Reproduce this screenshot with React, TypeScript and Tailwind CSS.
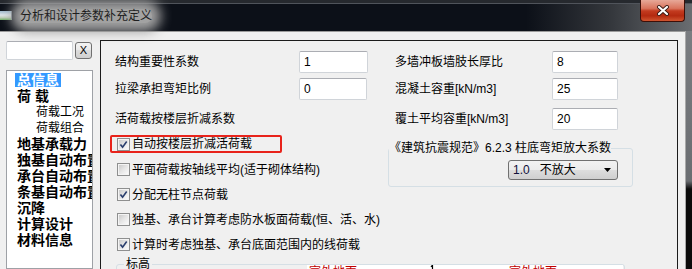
import React from 'react';

const inputCls =
  "h-[22px] bg-white border border-[#d0d4d9] border-t-[#abadb3] rounded-[2px] pl-[4px] text-[12px] leading-[20px] flex items-center";

function Check({ checked }: { checked?: boolean }) {
  return (
    <div className="w-[13px] h-[13px] shrink-0 border border-[#8e8f8f] bg-[#f4f4f4] p-[1px]">
      <div className="w-full h-full bg-[linear-gradient(135deg,#cbcbcb_0%,#e6e6e6_50%,#fafafa_100%)]">
        {checked && (
          <svg viewBox="0 0 9 9" className="w-[9px] h-[9px] block">
            <path d="M1.4 4.4 L3.6 7.1 L7.7 1.5" fill="none" stroke="#2b3f6e" strokeWidth="1.6" />
          </svg>
        )}
      </div>
    </div>
  );
}

function CheckRow({ checked, label }: { checked?: boolean; label: string }) {
  return (
    <div className="h-[25px] flex items-center pl-[7px]">
      <Check checked={checked} />
      <span className="ml-[2px] text-[12px] leading-[14px] whitespace-nowrap">{label}</span>
    </div>
  );
}

const tree = [
  { t: '荷 载', sub: false },
  { t: '荷载工况', sub: true },
  { t: '荷载组合', sub: true },
  { t: '地基承载力', sub: false },
  { t: '独基自动布置', sub: false },
  { t: '承台自动布置', sub: false },
  { t: '条基自动布置', sub: false },
  { t: '沉降', sub: false },
  { t: '计算设计', sub: false },
  { t: '材料信息', sub: false },
];

export default function App() {
  return (
    <div className="w-[692px] h-[269px] overflow-hidden bg-[#f0f0f0] flex flex-col text-black font-['Liberation_Sans','Noto_Sans_CJK_SC',sans-serif]">
      {/* title bar */}
      <div className="h-[31px] shrink-0 flex items-start bg-[linear-gradient(to_bottom,#26292e_0px,#26292e_3px,#50545b_3px,#50545b_4px,transparent_4px),linear-gradient(to_right,#0c1018_0%,#0c1018_76%,#33363b_88%,#6a6d71_100%)]">
        <div className="h-full flex items-center">
          <div className="w-[12px] h-[9px] bg-[linear-gradient(to_bottom,#9fb8cc_0%,#dfe6ea_45%,#c9d2c4_70%,#6fae63_100%)] border-r border-[#7f8b94]" />
          <span className="ml-[8px] text-[12px] leading-[14px] text-[#1e1e1e] bg-[#a2a2a2] rounded-[8px] shadow-[0_0_12px_9px_#a2a2a2] whitespace-nowrap">
            分析和设计参数补充定义
          </span>
        </div>
        <div className="ml-auto mr-[7px] w-[45px] h-[22px] border border-t-0 border-[#3d0f08] rounded-b-[4px] bg-[linear-gradient(to_bottom,#e7a898_0%,#d9735c_40%,#c33b20_52%,#b42a10_75%,#d05530_100%)] flex items-center justify-center">
          <svg viewBox="0 0 14 11" className="w-[14px] h-[11px]">
            <path d="M3 2 L11 9 M11 2 L3 9" stroke="#3a1a14" strokeWidth="4" strokeLinecap="round" />
            <path d="M3 2 L11 9 M11 2 L3 9" stroke="#ffffff" strokeWidth="2.2" strokeLinecap="round" />
          </svg>
        </div>
      </div>

      <div className="flex flex-1 min-h-0">
        {/* client */}
        <div className="w-[685px] border-t border-[#9b9b9b] flex pt-[8px]">
          {/* left nav */}
          <div className="ml-[6px] w-[87px] pt-[1px] flex flex-col">
            <div className="flex items-start h-[19px]">
              <div className="w-[67px] h-[19px] bg-white border border-[#d0d4d9] border-t-[#abadb3] rounded-[2px]" />
              <div className="ml-[2px] mt-[1px] w-[17px] h-[17px] border border-[#707070] rounded-[3px] bg-[linear-gradient(to_bottom,#f3f3f3_0%,#e9e9e9_50%,#dcdcdc_50%,#cfcfcf_100%)] flex items-center justify-center text-[11px] leading-[11px]">
                X
              </div>
            </div>
            <div className="mt-[10px] h-[300px] border border-[#9ea1a6] bg-white pt-[1px] overflow-hidden whitespace-nowrap">
              <div className="h-[16px] flex items-center pl-[8px]">
                <span className="h-[14px] px-[2px] bg-[#3399ff] text-white font-bold text-[14px] leading-[14px]">总信息</span>
              </div>
              {tree.map((it) => (
                <div
                  key={it.t}
                  className={
                    it.sub
                      ? 'h-[16px] flex items-center pl-[29px] text-[12px] leading-[14px]'
                      : 'h-[16px] flex items-center pl-[10px] text-[14px] leading-[14px] font-bold'
                  }
                >
                  {it.t}
                </div>
              ))}
            </div>
          </div>

          {/* main panel */}
          <div className="ml-[7px] w-[578px] h-[400px] border border-[#1b1b1b] flex flex-col">
            <div className="flex">
              {/* left column */}
              <div className="ml-[9px] w-[278px] flex flex-col">
                <div className="mt-[10px] h-[22px] flex items-center">
                  <span className="w-[189px] pl-[5px] text-[12px] leading-[14px]">结构重要性系数</span>
                  <div className={inputCls + ' w-[69px]'}>1</div>
                </div>
                <div className="mt-[5px] h-[22px] flex items-center">
                  <span className="w-[189px] pl-[5px] text-[12px] leading-[14px]">拉梁承担弯矩比例</span>
                  <div className={inputCls + ' w-[68px]'}>0</div>
                </div>
                <div className="mt-[8px] h-[22px] flex items-center">
                  <span className="pl-[5px] text-[12px] leading-[14px]">活荷载按楼层折减系数</span>
                </div>
                <div className="mt-[5px] w-[172px] h-[18px] border-2 border-[#e8231b] rounded-[2px] flex items-center pl-[5px]">
                  <Check checked />
                  <span className="ml-[2px] text-[12px] leading-[14px] whitespace-nowrap">自动按楼层折减活荷载</span>
                </div>
                <div className="mt-[4px]">
                  <CheckRow label="平面荷载按轴线平均(适于砌体结构)" />
                  <CheckRow checked label="分配无柱节点荷载" />
                  <CheckRow label="独基、承台计算考虑防水板面荷载(恒、活、水)" />
                  <CheckRow checked label="计算时考虑独基、承台底面范围内的线荷载" />
                </div>
              </div>

              {/* right column */}
              <div className="w-[245px] flex flex-col">
                <div className="mt-[10px] h-[22px] flex items-center">
                  <span className="w-[164px] pl-[7px] text-[12px] leading-[14px] whitespace-nowrap">多墙冲板墙肢长厚比</span>
                  <div className={inputCls + ' w-[66px]'}>8</div>
                </div>
                <div className="mt-[5px] h-[22px] flex items-center">
                  <span className="w-[164px] pl-[7px] text-[12px] leading-[14px] whitespace-nowrap">混凝土容重[kN/m3]</span>
                  <div className={inputCls + ' w-[66px]'}>25</div>
                </div>
                <div className="mt-[8px] h-[22px] flex items-center">
                  <span className="w-[164px] pl-[7px] text-[12px] leading-[14px] whitespace-nowrap">覆土平均容重[kN/m3]</span>
                  <div className={inputCls + ' w-[66px]'}>20</div>
                </div>
                <fieldset className="mt-[11px] w-[245px] border border-[#d5dfe5] rounded-[3px] pb-[6px]">
                  <legend className="ml-[0px] text-[12px] leading-[14px] whitespace-nowrap">《建筑抗震规范》6.2.3 柱底弯矩放大系数</legend>
                  <div className="flex justify-end pr-[14px] mt-[5px]">
                    <div className="w-[110px] h-[20px] border border-[#707070] rounded-[3px] bg-[linear-gradient(to_bottom,#f2f2f2_0%,#ebebeb_50%,#dddddd_50%,#cfcfcf_100%)] flex items-center pl-[4px] text-[12px] leading-[14px]">
                      <span className="text-[#10103a]">1.0</span>
                      <span className="ml-[10px]">不放大</span>
                      <svg viewBox="0 0 7 4" className="ml-auto mr-[6px] w-[7px] h-[4px]">
                        <path d="M0 0 L7 0 L3.5 4 Z" fill="#000" />
                      </svg>
                    </div>
                  </div>
                </fieldset>
              </div>
            </div>

            {/* 标高 */}
            <fieldset className="ml-[15px] w-[509px] border border-[#d5dfe5] rounded-[3px]">
              <legend className="ml-[7px] px-[2px] text-[12px] leading-[14px]">标高</legend>
              <div className="-mt-[6px] ml-[190px] mr-[1px] h-[60px] bg-white flex items-start text-[12px] leading-[14px] text-[#c00000] whitespace-nowrap">
                <span className="ml-[2px] w-[121px]">室外地面</span>
                <svg viewBox="0 0 4 6" className="w-[4px] h-[6px] mt-[0px]">
                  <path d="M2.5 0 L2.5 6 M2.5 0 L1 2" stroke="#000" strokeWidth="1.2" fill="none" />
                </svg>
                <span className="ml-[75px]">室外地面</span>
              </div>
            </fieldset>
          </div>
        </div>
        <div className="w-[1px] bg-[#a9a9a9]" />
        <div className="w-[6px] bg-[linear-gradient(to_bottom,#7a7d81_0px,#6a6d71_150px,#0b0b0b_158px,#0b0b0b_100%)]" />
      </div>
    </div>
  );
}
